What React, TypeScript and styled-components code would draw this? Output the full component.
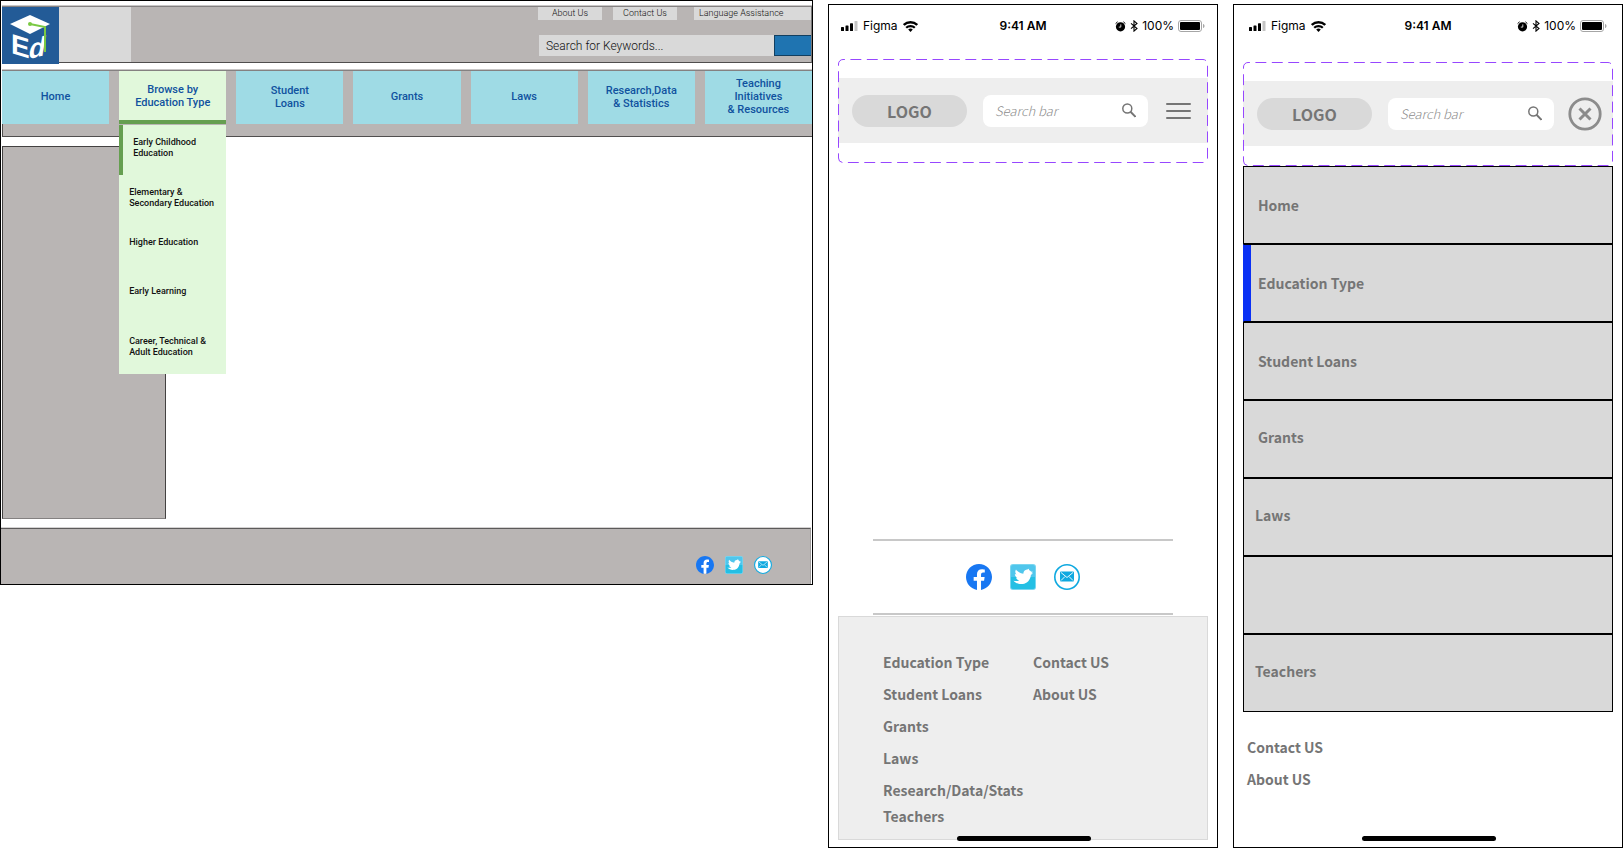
import React from "react";
import styled, { createGlobalStyle } from "styled-components";

const roboto = `Roboto, "Liberation Sans", sans-serif`;
const sourceSans = `"Noto Sans CJK JP", "Noto Sans", sans-serif`;
const inter = `Inter, "Liberation Sans", sans-serif`;

const GlobalStyle = createGlobalStyle`
  *, *::before, *::after { box-sizing: border-box; }
  body { margin: 0; background: #fff; }
  ul { list-style: none; margin: 0; padding: 0; }
  a { color: inherit; text-decoration: none; }
  button, input { font: inherit; border: 0; padding: 0; margin: 0; border-radius: 0; }
  button { background: none; color: inherit; cursor: pointer; }
  svg { display: block; }
`;

const Board = styled.main`
  display: grid;
  grid-template-columns: minmax(0, 813fr) minmax(0, 390fr) minmax(0, 390fr);
  gap: 15px;
  align-items: start;
`;

/* ---------- Desktop ---------- */

const Desktop = styled.section`
  border: 1px solid #000;
  padding-top: 5px;
  overflow: hidden;
  font-family: ${roboto};
`;

const TopBar = styled.header`
  display: flex;
  align-items: flex-start;
  height: 57px;
  margin-left: 1px;
  background: #b9b5b4;
  border-top: 1px solid #848181;
  border-bottom: 1px solid #504e4e;
  border-right: 1px solid #777;
  box-shadow: 0 -1px #c8c6c6;
`;

const LogoLink = styled.a`
  flex: none;
  width: 57px;
  height: 57px;
`;

const BrandPanel = styled.div`
  width: 72px;
  height: 55px;
  background: #d9d9d9;
`;

const TopTools = styled.div`
  width: 273px;
  margin-left: auto;
  color: #333;
`;

const UtilityNav = styled.nav`
  display: grid;
  grid-template-columns: 64px 64px 1fr;
  column-gap: 11px;
  font-size: 9px;
  font-weight: 300;
  line-height: 13px;
  text-align: center;
  color: #111;
`;

const UtilityLink = styled.a<{ $wide?: boolean }>`
  background: #d9d9d9;
  ${(p) => p.$wide && "margin-left: 6px; padding-left: 5px; text-align: left;"}
`;

const SearchForm = styled.form`
  display: flex;
  height: 21px;
  margin: 15px 0 0 1px;
`;

const KeywordInput = styled.input`
  width: 235px;
  padding-left: 7px;
  background: #d9d9d9;
  font-size: 12px;
  font-weight: 300;
  &::placeholder { color: #111; opacity: 1; }
`;

const SearchButton = styled.button`
  flex: 1;
  background: #1f74b1;
  border: 1px solid #123f60;
  border-right: 0;
`;

const MainNav = styled.nav`
  margin: 7px 0 0 1px;
  padding-bottom: 12px;
  background: #b9b5b4;
  border-top: 1px solid #848181;
  border-bottom: 1px solid #504e4e;
  box-shadow: 0 -1px #c8c6c6, inset 1px 0 #504e4e;
`;

const NavList = styled.ul`
  display: grid;
  grid-template-columns: repeat(7, 1fr);
  gap: 10px;
`;

const NavItem = styled.li`
  position: relative;
`;

const NavLink = styled.a<{ $open?: boolean }>`
  display: flex;
  align-items: center;
  justify-content: center;
  height: 53px;
  padding-bottom: ${(p) => (p.$open ? 0 : 2)}px;
  background: ${(p) => (p.$open ? "#e1f8db" : "#9fdbe5")};
  border-bottom: ${(p) => (p.$open ? "4px solid #659f50" : "0")};
  color: #10529f;
  font-size: 11px;
  font-weight: 500;
  line-height: 13px;
  text-align: center;
  white-space: pre-line;
`;

const Dropdown = styled.ul`
  position: absolute;
  z-index: 1;
  top: 100%;
  left: 0;
  right: 0;
  height: 249px;
  margin-top: 1px;
  display: grid;
  grid-template-rows: repeat(5, 1fr);
  background: #e1f8db;
`;

const DropdownLink = styled.a<{ $active?: boolean }>`
  display: block;
  height: 100%;
  padding: 12px 0 0 10px;
  border-left: ${(p) => (p.$active ? "4px solid #659f50" : "0")};
  color: #111;
  font-size: 9px;
  font-weight: 500;
  line-height: 11px;
  white-space: pre-line;
`;

const Sidebar = styled.aside`
  width: 164px;
  height: 373px;
  margin: 9px 0 0 1px;
  background: #b9b5b4;
  border: 1px solid #434141;
  border-bottom-color: #848181;
`;

const DesktopFooter = styled.footer`
  display: flex;
  justify-content: flex-end;
  align-items: flex-start;
  margin: 9px 1px 0 0;
  padding: 27px 38px 10px;
  background: #b9b5b4;
  border-top: 1px solid #5c5a5a;
  border-right: 1px solid #a09d9d;
  box-shadow: 0 -1px #d4d2d2;
`;

const SocialRow = styled.div<{ $gap: number }>`
  display: flex;
  justify-content: center;
  gap: ${(p) => p.$gap}px;
`;

/* ---------- Phones ---------- */

const Phone = styled.section`
  display: flex;
  flex-direction: column;
  min-height: 844px;
  margin-top: 4px;
  position: relative;
  border: 1px solid #000;
  padding: 0 9px 7px;
  color: #757575;
  font-family: ${sourceSans};
`;

const StatusBar = styled.div<{ $inset: number }>`
  display: grid;
  grid-template-columns: 1fr auto 1fr;
  align-items: center;
  height: 42px;
  padding: 0 ${(p) => p.$inset}px;
  color: #000;
  font-family: ${inter};
  font-size: 12px;
  line-height: 16px;
`;

const StatusGroup = styled.div<{ $end?: boolean }>`
  display: flex;
  align-items: center;
  gap: ${(p) => (p.$end ? 4 : 5)}px;
  justify-content: ${(p) => (p.$end ? "flex-end" : "flex-start")};
`;

const Time = styled.time`
  font-weight: 600;
`;

const HeaderFrame = styled.header<{ $top: number }>`
  position: relative;
  margin-top: ${(p) => p.$top}px;
  padding: 19px 0 20px;
`;

const DashOutline = styled.svg`
  position: absolute;
  inset: 0;
  width: 100%;
  height: 100%;
  pointer-events: none;
`;

const HeaderBar = styled.div<{ $end: number }>`
  display: flex;
  align-items: center;
  height: 65px;
  padding: 0 ${(p) => p.$end}px 0 14px;
  background: #eee;
`;

const LogoPill = styled.a`
  width: 115px;
  border-radius: 16px;
  background: #d9d9d9;
  font-size: 16px;
  font-weight: 700;
  line-height: 32px;
  text-align: center;
`;

const MobileSearch = styled.form<{ $gap: number }>`
  flex: 1;
  min-width: 0;
  display: flex;
  align-items: center;
  height: 32px;
  margin: 0 ${(p) => p.$gap}px 0 16px;
  padding: 0 12px;
  border-radius: 8px;
  background: #fff;
`;

const MobileInput = styled.input`
  flex: 1;
  min-width: 0;
  background: transparent;
  font-size: 13px;
  font-weight: 300;
  font-style: italic;
  &::placeholder { color: #8c8c8c; opacity: 1; }
`;

const Share = styled.div`
  width: 300px;
  margin: auto auto 1px;
  padding: 23px 0;
  border: solid #c8c8c8;
  border-width: 2px 0;
`;

const FooterPanel = styled.footer`
  display: grid;
  grid-template-columns: 150px 1fr;
  align-items: start;
  padding: 29px 0 13px 44px;
  border: 1px solid #d9d9d9;
  background: #eee;
`;

const LinkList = styled.ul`
  font-size: 14px;
  font-weight: 700;
`;

const LinkItem = styled.li<{ $compact?: boolean }>`
  white-space: nowrap;
  line-height: ${(p) => (p.$compact ? 20 : 32)}px;
`;

const MenuList = styled.ul`
  font-size: 14px;
  font-weight: 700;
`;

const MenuItem = styled.li<{ $active?: boolean }>`
  height: 78px;
  border: 1px solid #000;
  background: #d9d9d9;
  ${(p) => p.$active && "box-shadow: inset 7px 0 #0a30f5; border-left-color: #0a30f5;"}
`;

const MenuLink = styled.a<{ $tight?: boolean; $raised?: boolean }>`
  display: flex;
  align-items: center;
  height: 100%;
  padding-left: ${(p) => (p.$tight ? 11 : 14)}px;
  padding-bottom: ${(p) => (p.$raised ? 4 : 0)}px;
`;

const ExtraNav = styled.nav`
  padding: 19px 4px;
`;

const HomeIndicator = styled.div`
  position: absolute;
  bottom: 6px;
  left: 50%;
  width: 134px;
  height: 5px;
  margin-left: -66px;
  border-radius: 3px;
  background: #000;
`;

/* ---------- Drawings ---------- */

const EdLogo = () => (
  <svg width="57" height="57" viewBox="0 0 57 57" role="img" aria-label="Ed">
    <rect width="57" height="57" fill="#235b97" />
    <g fill="#fff" fontFamily="Liberation Sans, sans-serif" fontWeight="700">
      <text fontSize="28" transform="translate(9 46) skewY(17)">E</text>
      <text fontSize="27" transform="translate(27 52) skewY(-14)" fontStyle="italic">d</text>
    </g>
    <path d="M8 17 28 8l20 9-20 10z" fill="#fff" />
    <circle cx="28" cy="17" r="2" fill="#7ac943" />
    <path d="M28 17l15 3v25" fill="none" stroke="#7ac943" strokeWidth="2" />
  </svg>
);

const Facebook = ({ size }: { size: number }) => (
  <svg width={size} height={size} viewBox="0 0 24 24">
    <circle cx="12" cy="12" r="11.5" fill="#fff" />
    <path
      fill="#1877f2"
      d="M24 12.073c0-6.627-5.373-12-12-12s-12 5.373-12 12c0 5.99 4.388 10.954 10.125 11.854v-8.385H7.078v-3.47h3.047V9.43c0-3.007 1.792-4.669 4.533-4.669 1.312 0 2.686.235 2.686.235v2.953H15.83c-1.491 0-1.956.925-1.956 1.874v2.25h3.328l-.532 3.47h-2.796v8.385C19.612 23.027 24 18.062 24 12.073z"
    />
  </svg>
);

const Twitter = ({ size }: { size: number }) => (
  <svg width={size} height={size} viewBox="0 0 26 26">
    <rect width="26" height="26" rx="3" fill="#7ad6f0" />
    <rect x="1" y="1" width="24" height="24" rx="2" fill="#50c6ec" />
    <path d="M1 13h24v10a2 2 0 0 1-2 2H3a2 2 0 0 1-2-2z" fill="#24bfe4" />
    <path
      fill="#fff"
      d="M6 5.500c1.500 2.400 4.200 3.800 7.300 4.200.2-2.300 1.600-3.900 3.700-4.100.9-.1 1.600-.6 2.100-1.100l-.1 1.400c.9.300 1.600.9 2 1.700.8.300 1.500.3 2 .2-.4.600-1 1.100-1.700 1.300.5.200 1 .3 1.500.2-.5.700-1.100 1.200-1.900 1.500-.4 5.300-3.700 8.700-8.200 9.200-3.500.4-7-.7-9.200-3.300 2 .7 4 .5 5.700-.5-1.700-.3-2.900-1.200-3.300-2.600.5.100 1 .1 1.500-.1C5.700 12.900 4.800 11.600 4.900 10c.5.300 1 .500 1.600.5C5 9.100 4.900 7.200 6 5.500z"
    />
  </svg>
);

const Mail = ({ size }: { size: number }) => (
  <svg width={size} height={size} viewBox="0 0 26 26">
    <circle cx="13" cy="13" r="12.200" fill="#fff" stroke="#0fa9e0" strokeWidth="1.600" />
    <rect x="6" y="7.500" width="14" height="10" rx="1" fill="#0fa9e0" />
    <path d="M7 8.500l6 5 6-5M7 16.500l4-4M19 16.500l-4-4" fill="none" stroke="#fff" strokeWidth=".9" />
  </svg>
);

const Socials = ({ size, gap }: { size: number; gap: number }) => (
  <SocialRow $gap={gap}>
    <a href="#facebook" aria-label="Facebook"><Facebook size={size} /></a>
    <a href="#twitter" aria-label="Twitter"><Twitter size={size} /></a>
    <a href="#mail" aria-label="Email"><Mail size={size} /></a>
  </SocialRow>
);

const Signal = () => (
  <svg width="17" height="10" viewBox="0 0 17 10">
    <rect y="6" width="3" height="4" rx=".6" />
    <rect x="4.500" y="4.500" width="3" height="5.500" rx=".6" />
    <rect x="9" y="2.300" width="3" height="7.700" rx=".6" />
    <rect x="13.500" width="3" height="10" rx=".6" fill="#c4c4c4" />
  </svg>
);

const Wifi = () => (
  <svg width="15" height="11" viewBox="0 0 15 11" fill="none" stroke="#000">
    <path d="M.8 4a9.600 9.600 0 0 1 13.400 0" strokeWidth="2.400" />
    <path d="M3.200 6.800a6.200 6.200 0 0 1 8.600 0" strokeWidth="2.200" />
    <path d="M7.500 10.900 5.200 8.600a3.300 3.300 0 0 1 4.600 0z" fill="#000" stroke="none" />
  </svg>
);

const Alarm = () => (
  <svg width="11" height="11" viewBox="0 0 11 11">
    <circle cx="5.500" cy="5.800" r="4.600" />
    <path d="M.6 2.600 2.600.8M10.400 2.600 8.400.8" stroke="#000" strokeWidth="1" />
    <path d="M5.800 3.400v2.700H3.800" stroke="#fff" strokeWidth=".8" fill="none" />
  </svg>
);

const Bluetooth = () => (
  <svg width="8" height="12" viewBox="0 0 8 12">
    <path d="M1 3.300l6 5.200-3 2.600V.9l3 2.600-6 5.200" fill="none" stroke="#000" strokeWidth="1.100" />
  </svg>
);

const Battery = () => (
  <svg width="27" height="12" viewBox="0 0 27 12">
    <rect x=".5" y=".5" width="23" height="11" rx="2.500" fill="none" stroke="#a6a6a6" />
    <rect x="2" y="2" width="20" height="8" rx="1" />
    <path d="M25 4v4c1-.3 1.500-1 1.500-2S26 4.300 25 4z" fill="#a6a6a6" />
  </svg>
);

const SearchIcon = () => (
  <svg width="14" height="15" viewBox="0 0 14 15" fill="none" stroke="#757575" strokeWidth="1.500">
    <circle cx="5.300" cy="5.500" r="4.500" />
    <path d="M8.500 8.800l5 5" strokeWidth="2" />
  </svg>
);

const MenuIcon = () => (
  <svg width="25" height="16" viewBox="0 0 25 16" stroke="#757575" strokeWidth="2" strokeLinecap="round">
    <path d="M1 1h23M1 8h23M1 15h23" />
  </svg>
);

const CloseIcon = () => (
  <svg width="34" height="34" viewBox="0 0 34 34" fill="none" stroke="#8c8c8c">
    <circle cx="17" cy="17" r="15.200" strokeWidth="2.800" />
    <path d="M11.500 11.500l11 11M22.500 11.500l-11 11" strokeWidth="3" />
  </svg>
);

/* ---------- Shared phone parts ---------- */

const PhoneStatus = ({ inset }: { inset: number }) => (
  <StatusBar $inset={inset}>
    <StatusGroup>
      <Signal />
      <span>Figma</span>
      <Wifi />
    </StatusGroup>
    <Time>9:41 AM</Time>
    <StatusGroup $end>
      <Alarm />
      <Bluetooth />
      <span>100%</span>
      <Battery />
    </StatusGroup>
  </StatusBar>
);

const PhoneHeader = ({ open }: { open?: boolean }) => (
  <HeaderFrame $top={open ? 15 : 12}>
    <HeaderBar $end={open ? 11 : 17}>
      <LogoPill href="#home">LOGO</LogoPill>
      <MobileSearch $gap={open ? 14 : 18}>
        <MobileInput type="search" aria-label="Search bar" placeholder="Search bar" />
        <button type="button" aria-label="Search"><SearchIcon /></button>
      </MobileSearch>
      <button type="button" aria-label={open ? "Close menu" : "Open menu"}>
        {open ? <CloseIcon /> : <MenuIcon />}
      </button>
    </HeaderBar>
    <DashOutline>
      <rect
        x=".5"
        y=".5"
        rx="4.500"
        fill="none"
        stroke="#9747ff"
        strokeDasharray="10.900 5.520"
        strokeDashoffset="9"
        width="calc(100% - 1px)"
        height="calc(100% - 1px)"
        style={{ width: "calc(100% - 1px)", height: "calc(100% - 1px)" }}
      />
    </DashOutline>
  </HeaderFrame>
);

const navItems = [
  "Home",
  "Browse by\nEducation Type",
  "Student\nLoans",
  "Grants",
  "Laws",
  "Research,Data\n& Statistics",
  "Teaching\nInitiatives\n& Resources",
];

const educationTypes = [
  "Early Childhood\nEducation",
  "Elementary &\nSecondary Education",
  "Higher Education",
  "Early Learning",
  "Career, Technical &\nAdult Education",
];

const footerLinks = ["Education Type", "Student Loans", "Grants", "Laws", "Research/Data/Stats", "Teachers"];
const contactLinks = ["Contact US", "About US"];
const menuLinks = ["Home", "Education Type", "Student Loans", "Grants", "Laws", "", "Teachers"];

const ContactList = () => (
  <LinkList>
    {contactLinks.map((label) => (
      <LinkItem key={label}><a href="#contact">{label}</a></LinkItem>
    ))}
  </LinkList>
);

export default function App() {
  return (
    <>
      <GlobalStyle />
      <Board>
        <Desktop>
          <TopBar>
            <LogoLink href="#home"><EdLogo /></LogoLink>
            <BrandPanel />
            <TopTools>
              <UtilityNav>
                <UtilityLink href="#about">About Us</UtilityLink>
                <UtilityLink href="#contact">Contact Us</UtilityLink>
                <UtilityLink href="#language" $wide>Language Assistance</UtilityLink>
              </UtilityNav>
              <SearchForm>
                <KeywordInput type="search" aria-label="Search for Keywords" placeholder="Search for Keywords..." />
                <SearchButton type="button" aria-label="Search" />
              </SearchForm>
            </TopTools>
          </TopBar>
          <MainNav>
            <NavList>
              {navItems.map((label, i) => (
                <NavItem key={label}>
                  <NavLink href="#section" $open={i === 1}>{label}</NavLink>
                  {i === 1 && (
                    <Dropdown>
                      {educationTypes.map((type, n) => (
                        <li key={type}>
                          <DropdownLink href="#education" $active={n === 0}>{type}</DropdownLink>
                        </li>
                      ))}
                    </Dropdown>
                  )}
                </NavItem>
              ))}
            </NavList>
          </MainNav>
          <Sidebar />
          <DesktopFooter>
            <Socials size={18} gap={11} />
          </DesktopFooter>
        </Desktop>

        <Phone>
          <PhoneStatus inset={3} />
          <PhoneHeader />
          <Share>
            <Socials size={26} gap={18} />
          </Share>
          <FooterPanel>
            <LinkList>
              {footerLinks.map((label) => (
                <LinkItem key={label} $compact={label === "Teachers"}>
                  <a href="#footer">{label}</a>
                </LinkItem>
              ))}
            </LinkList>
            <ContactList />
          </FooterPanel>
          <HomeIndicator />
        </Phone>

        <Phone>
          <PhoneStatus inset={6} />
          <PhoneHeader open />
          <MenuList>
            {menuLinks.map((label, i) => (
              <MenuItem key={i} $active={i === 1}>
                {label && <MenuLink href="#menu" $tight={i > 3} $raised={i > 2}>{label}</MenuLink>}
              </MenuItem>
            ))}
          </MenuList>
          <ExtraNav>
            <ContactList />
          </ExtraNav>
          <HomeIndicator />
        </Phone>
      </Board>
    </>
  );
}
